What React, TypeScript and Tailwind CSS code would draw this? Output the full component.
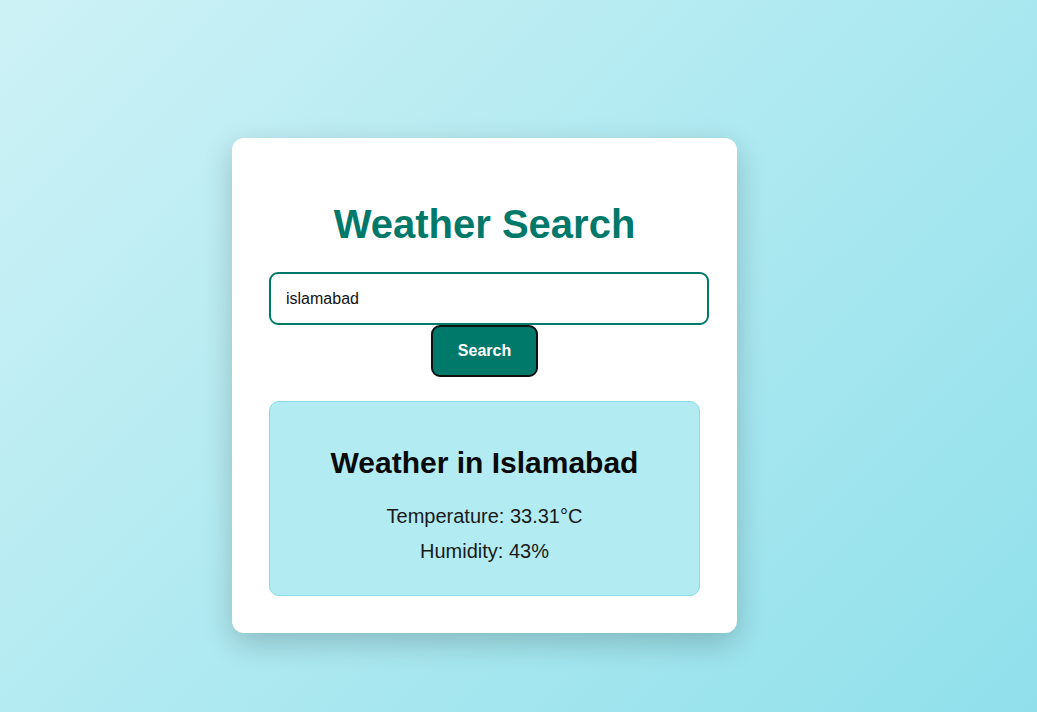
export default function App() {
  return (
    <div
      className="min-h-[712px] w-full bg-[linear-gradient(135deg,#cdf2f6,#90e0eb)] pl-[232px] pt-[138px]"
      style={{ fontFamily: '"Liberation Sans", Arial, sans-serif' }}
    >
      <div className="w-[505px] h-[495px] rounded-[12px] bg-white px-[37px] pt-[63px] shadow-[0_10px_30px_rgba(0,0,0,0.2)]">
        <h1 className="text-center text-[40px] leading-[46px] font-bold text-[#00796b]">Weather Search</h1>
        <div className="mt-[25px] flex flex-col items-center">
          <input
            type="text"
            defaultValue="islamabad"
            className="box-border block h-[53px] w-[440px] self-start rounded-[9px] border-2 border-[#00796b] bg-white px-[15px] text-[16px] text-[#111] outline-none"
          />
          <button className="box-border h-[52px] w-[107px] rounded-[9px] border-2 border-[#111] bg-[#00796b] text-[16px] font-bold text-white">
            Search
          </button>
        </div>
        <div className="mt-[24px] h-[195px] rounded-[10px] border border-[#86dbe6] bg-[#b2ebf2] pt-[44px] text-center">
          <h2 className="text-[30px] leading-[34px] font-bold text-[#0a0a0a]">Weather in Islamabad</h2>
          <p className="mt-[25px] text-[20px] leading-[23px] text-[#1a1a1a]">Temperature: 33.31°C</p>
          <p className="mt-[12px] text-[20px] leading-[23px] text-[#1a1a1a]">Humidity: 43%</p>
        </div>
      </div>
    </div>
  );
}
